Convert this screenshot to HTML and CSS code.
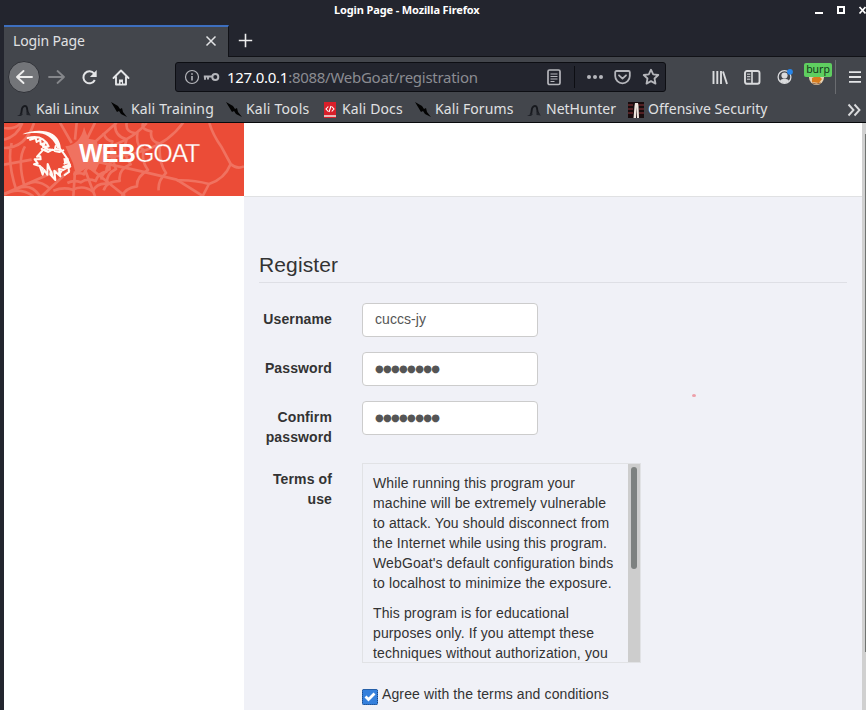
FILE: index.html
```html
<!DOCTYPE html>
<html lang="en">
<head>
<meta charset="utf-8">
<title>Login Page</title>
<link rel="stylesheet" href="styles.css">
</head>
<body>
<div class="window">
  <header class="titlebar">
    <span class="window-title">Login Page - Mozilla Firefox</span>
    <svg class="window-controls" width="54" height="20" viewBox="0 0 54 20"><path d="M3 13h8" stroke="#fff" stroke-width="2"/><rect x="26" y="7" width="6" height="6" fill="none" stroke="#fff" stroke-width="2"/><path d="m47.500 7 6 6.500m0-6.500-6 6.500" stroke="#fff" stroke-width="1.700"/></svg>
  </header>
  <div class="tabs">
    <div class="tab"><span>Login Page</span><svg width="12" height="12" viewBox="0 0 12 12"><path d="m1.500 1.500 9 9m0-9-9 9" stroke="#e2e3e5" stroke-width="1.500"/></svg></div>
    <svg class="new-tab" width="15" height="15" viewBox="0 0 15 15"><path d="M7.500 .8v13.400M.8 7.500h13.400" stroke="#eee" stroke-width="1.600"/></svg>
  </div>
  <nav class="toolbar">
    <div class="back"><svg width="18" height="16" viewBox="0 0 18 16"><path d="M17 8H2m6.500-6L2 8l6.500 6" fill="none" stroke="#eee" stroke-width="1.900" stroke-linejoin="round" stroke-linecap="round"/></svg></div>
    <svg class="forward" width="18" height="16" viewBox="0 0 18 16"><path d="M1 8h15M9.500 2 16 8l-6.500 6" fill="none" stroke="#85878b" stroke-width="1.800" stroke-linejoin="round" stroke-linecap="round"/></svg>
    <svg class="reload" width="17" height="17" viewBox="0 0 17 17"><path d="M13.800 11a6 6 0 1 1-.7-6.400" fill="none" stroke="#e4e5e7" stroke-width="2"/><path d="M15.700 1v7H8.900z" fill="#e4e5e7"/></svg>
    <svg class="home" width="18" height="17" viewBox="0 0 18 17"><path d="M1.500 9 9 1.500 16.500 9M4 8v7.500h10V8" fill="none" stroke="#e4e5e7" stroke-width="1.900" stroke-linejoin="round" stroke-linecap="round"/><path d="M7 15v-4.500h4V15" fill="#e4e5e7"/><path d="M8.600 13h1.200v2H8.600z" fill="#43464c"/></svg>
    <div class="urlbar">
      <svg width="16" height="16" viewBox="0 0 16 16"><circle cx="8" cy="8" r="6.500" fill="none" stroke="#b5b6bb" stroke-width="1.200"/><path d="M8 7v4.500M8 4.200v1.500" stroke="#b5b6bb" stroke-width="1.600"/></svg>
      <svg class="key" width="17" height="10" viewBox="0 0 17 10"><circle cx="12.300" cy="5" r="3" fill="none" stroke="#b5b6bb" stroke-width="2"/><path d="M9.500 4.500H.8M2 4.500v3.300M5 4.500v3" fill="none" stroke="#b5b6bb" stroke-width="1.900"/></svg>
      <span class="url"><b>127.0.0.1</b>:8088/WebGoat/registration</span>
      <svg class="reader" width="16" height="17" viewBox="0 0 16 17"><rect x="2" y="1" width="12" height="14.500" rx="1.500" fill="none" stroke="#b5b6bb" stroke-width="1.700"/><path d="M4.500 5h7m-7 2.500h7m-7 2.500h7m-7 2.500h4" stroke="#b5b6bb" stroke-width="1.100"/></svg>
      <i class="url-divider"></i>
      <svg class="dots" width="18" height="6" viewBox="0 0 18 6" fill="#b5b6bb"><circle cx="3" cy="3" r="2"/><circle cx="9" cy="3" r="2"/><circle cx="15" cy="3" r="2"/></svg>
      <svg class="pocket" width="17" height="15" viewBox="0 0 17 15"><path d="M2.500 1h12a1.300 1.300 0 0 1 1.300 1.300V6a7.300 7.300 0 0 1-14.600 0V2.300A1.300 1.300 0 0 1 2.500 1z" fill="none" stroke="#b5b6bb" stroke-width="1.800"/><path d="m5 5.300 3.500 3.300L12 5.300" fill="none" stroke="#b5b6bb" stroke-width="1.800" stroke-linecap="round" stroke-linejoin="round"/></svg>
      <svg class="star" width="18" height="18" viewBox="0 0 18 18"><path d="m9 1.700 2.200 4.700 5.100.6-3.800 3.500 1 5.100L9 13.100l-4.500 2.500 1-5.100L1.700 7l5.100-.6z" fill="none" stroke="#b5b6bb" stroke-width="1.800" stroke-linejoin="round"/></svg>
    </div>
    <svg class="library" width="16" height="15" viewBox="0 0 16 15"><path d="M1.500 1v13M5.300 1v13M9 1v13M11 1.500l4 12.500" fill="none" stroke="#dadbdd" stroke-width="1.900"/></svg>
    <svg class="sidebar" width="17" height="15" viewBox="0 0 17 15"><rect x="1" y="1" width="14.500" height="12.800" rx="2" fill="none" stroke="#dadbdd" stroke-width="1.900"/><path d="M8 1v13" stroke="#dadbdd" stroke-width="1.600"/><path d="M3 4.200h3.300M3 6.700h3.300M3 9.200h3.300" stroke="#dadbdd"/></svg>
    <svg class="account" width="17" height="18" viewBox="0 0 17 18"><circle cx="7.500" cy="9" r="6.400" fill="none" stroke="#dadbdd" stroke-width="1.300"/><circle cx="7.500" cy="7.500" r="3.100" fill="#dadbdd"/><path d="M3 13c1-3 8-3 9 0-2.500 2.700-6.500 2.700-9 0" fill="#dadbdd"/><circle cx="13" cy="3.800" r="2.900" fill="#2684e8"/></svg>
    <div class="proxy"><svg width="17" height="17" viewBox="0 0 17 17"><circle cx="8.500" cy="8.500" r="7.500" fill="#e7d2b3"/><path d="m4 9 6-3 4 4-3 4-7-1z" fill="#d97c1d"/><path d="M4 14q4 2 9 0" stroke="#9b6942" fill="none"/></svg><span class="badge">burp</span></div>
    <i class="tool-divider"></i>
    <svg class="menu" width="12" height="12" viewBox="0 0 12 12"><path d="M0 1.200h12M0 6h12M0 10.800h12" stroke="#e4e5e7" stroke-width="1.800"/></svg>
  </nav>
  <nav class="bookmarks">
    <svg width="0" height="0" class="defs"><defs>
      <symbol id="dragon" viewBox="0 0 16 16"><path d="M4.500 12.500C6.500 10 5 7.500 6.500 5.500 8 3.500 10.500 3.500 11 6c.3 2 0 4 2 6.500" fill="none" stroke="#17191e" stroke-width="1.900"/><path d="M1 14q3-1 4-3l2 1-2 2zM10.500 9l2 2 2.500 2.500-4.500-.5z" fill="#202329"/></symbol>
      <symbol id="blade" viewBox="0 0 16 16"><path d="m0 0 7 4 2 3 2-1 1 4 4 5-6-3-2-3-2 1-3-5z" fill="#030303"/></symbol>
    </defs></svg>
    <a class="bm bm-linux"><svg width="16" height="16"><use href="#dragon"/></svg><span>Kali Linux</span></a>
    <a class="bm bm-training"><svg width="16" height="16"><use href="#blade"/></svg><span>Kali Training</span></a>
    <a class="bm bm-tools"><svg width="16" height="16"><use href="#blade"/></svg><span>Kali Tools</span></a>
    <a class="bm bm-docs"><svg width="16" height="16" viewBox="0 0 16 16"><path d="M2 0h12v16H2z" fill="#d91f2a"/><path d="M2 13h12v2H2z" fill="#e9b7b8"/><path d="M6.300 4.500 4 7l2.300 2.500m3.400-5L12 7 9.700 9.500M9 4 7 10" fill="none" stroke="#fff" stroke-width="1.100"/></svg><span>Kali Docs</span></a>
    <a class="bm bm-forums"><svg width="16" height="16"><use href="#blade"/></svg><span>Kali Forums</span></a>
    <a class="bm bm-hunter"><svg width="16" height="16"><use href="#dragon"/></svg><span>NetHunter</span></a>
    <a class="bm bm-security"><svg width="16" height="16" viewBox="0 0 16 16"><path d="M0 0h16v16H0z" fill="#180c0e"/><path d="M0 3h5m5 0h6M0 7h5m6 0h5M0 11h5m6 0h5" stroke="#67272b" stroke-width="1.500"/><path d="M5.500 16 6.500 4 7 1h3l.5 3 .5 12H9L8.500 5 8 16z" fill="#eee7df"/></svg><span>Offensive Security</span></a>
    <svg class="more" width="14" height="14" viewBox="0 0 14 14"><path d="m1.500 1.500 5 5.500-5 5.500m6-11 5 5.500-5 5.500" fill="none" stroke="#dadbdd" stroke-width="1.900"/></svg>
  </nav>
  <div class="viewport">
    <aside>
      <div class="brand">
        <svg class="web" viewBox="12 15 720 219" preserveAspectRatio="none">
          <path d="M12 15h720v219H12z" fill="#eb4c37"/>
          <g fill="none" stroke="#f07260" stroke-width="8" stroke-linejoin="round">
            <path d="M215 75 180 14M225 65 230 14M260 65 285 14M275 80 350 14M290 95q100-20 150-80M290 115q80 5 150-20t110-82M285 130q100 20 245 55l78 49M270 150l105 84M255 155l30 80M225 160l-5 75M210 155l-85 80M190 150 12 228M95 125 12 140"/>
            <path d="M12 65q40-10 55-50M12 90q65 0 90-75M35 75q-15 55 15 145M75 85q-25 40 0 125M45 215q45-25 75 20M85 197q30-15 65 15M160 218q30-12 58-3 32-15 60 5 12-25 42-23 0-31 28-44-14-27 0-50M202 195q20-10 40-2 20-14 45-4 8-24 32-28 0-22 20-32-10-18 0-38M220 170q20-8 32-1 5-20 24-27"/>
            <path d="M345 20q0 35 35 44-15 40 12 75-38 15-33 50-40 1-48 28M380 14q-5 30 32 32-5 40 20 50-10 30 12 60-35 20-33 49-35 5-45 30M430 14q-10 20 24 26-6 30 26 37-6 54 18 88-25 23-22 52M310 45q10 25 27 25-9 30 8 50-20 13-16 34-23 9-25 31M12 30q35 5 50-15M12 230q45-27 88 5"/>
            <path d="M628 15q10 35 37 73l27 50q19 17 40 7M692 138q-18 45-65 60l-19 36M530 187q50-2 97 11"/>
          </g>
          <path d="M196 85q45-5 56-58l13 35 25 5 6 26 30-5-20 27 30 15-38 6-12 25-28-10-30 20-9-35z" fill="#f07260"/>
          <g transform="translate(48 18)" fill="#fffaf5">
            <path d="M19 31C42 20 85 15 110 30c18 11 24 29 25 46l-11-3C114 48 97 31 70 28c-19-3-35 0-51 3z"/>
            <g fill="none" stroke="#fffaf5" stroke-width="6" stroke-linejoin="round" stroke-linecap="round">
              <path d="M35 42c30-8 51 0 63 25M42 47l17-5 3 12 11-7 1 14 12-4-5 12 14-2-9 9M78 63l17 13 19 2M77 75l20 9 12-7M119 66l-2 8 15 3M116 81l14 3 12-5M133 75l12 16 8 12 3 13 6 7-5 9"/>
              <path d="M80 79 63 98l10-1 1 9-18 0 9 12-11 3 17 5 9 26 5-14 9 14 1-32 9 22-1 10 15 16-3-28 18 17-4-22 13 3 13-8-13-1 15-6 2 21-13 9M145 119l13-5 5 14-10-2"/>
            </g>
            <path d="m142 103 15-1 4 14-9-2-7 7zM71 122l13 11-3 13zM107 138l7 22-12-9zM126 143l16-5-12 19z"/>
          </g>
        </svg>
        <span class="brand-name"><b>WEB</b>GOAT</span>
      </div>
    </aside>
    <section class="content">
      <div class="topbar"></div>
      <main>
        <h1>Register</h1>
        <form>
          <label class="label">Username</label><input value="cuccs-jy" type="text" aria-label="Username">
          <label class="label">Password</label><div class="field">●●●●●●●●</div>
          <label class="label">Confirm password</label><div class="field">●●●●●●●●</div>
          <label class="label">Terms of use</label>
          <div class="terms"><div class="terms-text"><p>While running this program your<br>machine will be extremely vulnerable<br>to attack. You should disconnect from<br>the Internet while using this program.<br>WebGoat's default configuration binds<br>to localhost to minimize the exposure.</p><p>This program is for educational<br>purposes only. If you attempt these<br>techniques without authorization, you</p></div><div class="terms-scroll"><i></i></div></div>
          <div class="agree"><svg width="16" height="16" viewBox="0 0 16 16"><rect width="16" height="16" rx="2" fill="#3580dc"/><rect x=".5" y=".5" width="15" height="15" rx="1" fill="none" stroke="#173f75" stroke-dasharray="1 1"/><path d="m3.500 7.500 3 3 6-6" fill="none" stroke="#fff" stroke-width="2.800"/></svg><span>Agree with the terms and conditions</span></div>
        </form>
        <i class="speck"></i>
      </main>
    </section>
    <div class="page-scroll"><i></i></div>
  </div>
</div>
</body>
</html>
```
FILE: styles.css
```css
* { box-sizing: border-box; }
body { margin: 0; overflow: hidden; background: #23252e; }
svg { display: block; flex: none; }
.window { width: 866px; height: 710px; padding-left: 4px; overflow: hidden; font-family: "Noto Sans", sans-serif; color: #e0e1e3; display: flex; flex-direction: column; }
.titlebar { height: 25px; flex: none; display: flex; justify-content: flex-end; }
.window-title { width: 146px; margin-right: 332px; font-size: 11px; line-height: 20px; font-weight: 700; color: #fff; white-space: nowrap; letter-spacing: -.13px; }
.tabs { height: 32px; flex: none; display: flex; border-bottom: 1px solid #111217; }
.tab { width: 225px; height: 32px; padding: 0 11px 3px 9px; display: flex; align-items: center; justify-content: space-between; background: #43464c; border-top: 2px solid #3d6fbf; border-right: 1px solid #111217; font-size: 14px; letter-spacing: -.15px; }
.new-tab { margin: 8px 0 0 9px; }
.toolbar { height: 40px; flex: none; display: flex; align-items: center; background: #43464c; }
.back { width: 32px; height: 32px; margin-left: 4px; border-radius: 50%; background: #737579; border: 1px solid #303238; display: flex; align-items: center; justify-content: center; }
.forward { margin-left: 8px; }
.reload { margin-left: 15px; }
.home { margin-left: 14px; }
.urlbar { width: 491px; height: 30px; margin-left: 45px; padding-left: 8px; display: flex; align-items: center; flex: none; background: #23252e; border: 1px solid #0d0e13; border-radius: 3px; }
.key { margin-left: 3px; }
.url { width: 312px; margin-left: 7px; font-size: 15px; line-height: 28px; color: #8b8c92; white-space: nowrap; letter-spacing: -.27px; }
.url b { color: #fff; font-weight: 400; }
.reader { margin-left: 7px; }
.url-divider { width: 1px; height: 22px; background: #0d0e13; margin-left: 12px; }
.dots { margin-left: 11px; }
.pocket { margin-left: 10px; }
.star { margin-left: 11px; }
.library { margin-left: 46px; }
.sidebar { margin-left: 16px; }
.account { margin-left: 16px; }
.proxy { position: relative; margin-left: 14px; }
.badge { position: absolute; left: -4px; top: -6px; width: 28px; height: 14px; background: #5fce60; border-radius: 2px; color: #12351a; font-size: 10.5px; line-height: 12px; text-align: center; }
.tool-divider { width: 1px; height: 34px; margin-left: 10px; background: #6a6c70; }
.menu { margin-left: 13px; }
.bookmarks { height: 26px; flex: none; display: flex; align-items: center; background: #43464c; border-bottom: 1px solid #08090c; font-size: 14px; }
.defs { position: absolute; }
.bm { height: 24px; flex: none; display: flex; align-items: center; gap: 4px; white-space: nowrap; }
.bm span { padding-bottom: 2px; }
.bm-linux { width: 94px; padding-left: 12px; }
.bm-training { width: 115px; padding-left: 13px; letter-spacing: .15px; }
.bm-tools { width: 109px; padding-left: 13px; letter-spacing: .2px; }
.bm-docs { width: 93px; letter-spacing: .15px; }
.bm-forums { width: 111px; letter-spacing: .1px; }
.bm-hunter { width: 102px; }
.bm-security { width: 150px; letter-spacing: .05px; }
.more { margin-left: auto; margin-right: 5px; }
.viewport { flex: 1; min-height: 0; display: flex; background: #fff; font-family: "Liberation Sans", sans-serif; color: #333; }
aside { width: 240px; flex: none; }
.brand { height: 73px; display: grid; overflow: hidden; }
.brand > * { grid-area: 1 / 1; }
.web { width: 240px; height: 73px; }
.brand-name { padding: 15px 0 0 75px; color: #fff; font-size: 25px; line-height: 30px; white-space: nowrap; z-index: 1; letter-spacing: -1.2px; -webkit-text-stroke: .25px #eb4c37; }
.brand-name b { -webkit-text-stroke: 0; letter-spacing: -.8px; }
.content { width: 618px; flex: none; display: flex; flex-direction: column; }
.topbar { height: 74px; flex: none; border-bottom: 1px solid #e0e1e3; }
main { flex: 1; padding: 55px 15px 0; background: #f0f1f7; position: relative; }
h1 { margin: 0 0 20px; height: 31px; border-bottom: 1px solid #dedfe5; font-size: 21px; line-height: 26px; font-weight: 400; letter-spacing: .12px; }
form { display: grid; grid-template-columns: 73px 279px; column-gap: 30px; grid-template-rows: 49px 49px 62px 215px 40px; font-size: 14px; line-height: 20px; letter-spacing: .12px; }
.label { padding-top: 6px; text-align: right; font-weight: 700; }
input, .field { width: 176px; height: 34px; margin: 0; padding: 5px 12px 7px; background: #fff; border: 1px solid #ccc; border-radius: 4px; font: 14px/20px "Liberation Sans", sans-serif; letter-spacing: .05px; color: #555; }
.field { padding: 6px 12px; font-family: "DejaVu Sans", sans-serif; font-size: 10px; letter-spacing: -.7px; }
.terms { height: 200px; display: flex; border: 1px solid #e1e2e5; overflow: hidden; }
.terms-text { width: 265px; flex: none; padding: 9px 10px; white-space: nowrap; }
.terms p { margin: 0 0 10px; }
.terms-scroll { width: 12px; flex: none; padding: 3px; background: #cdcdcd; }
.terms-scroll i { display: block; width: 6px; height: 102px; border-radius: 3px; background: #7d8180; }
.agree { grid-column: 2; display: flex; gap: 4px; padding-top: 6px; }
.agree svg { margin-top: 5px; }
.speck { position: absolute; left: 448px; top: 197px; width: 4px; height: 3px; border-radius: 50%; background: #eda0a9; }
.page-scroll { width: 4px; background: #d0d0d0; padding: 11px 0 0 3px; }
.page-scroll i { display: block; width: 1px; height: 518px; background: #707371; }
```
